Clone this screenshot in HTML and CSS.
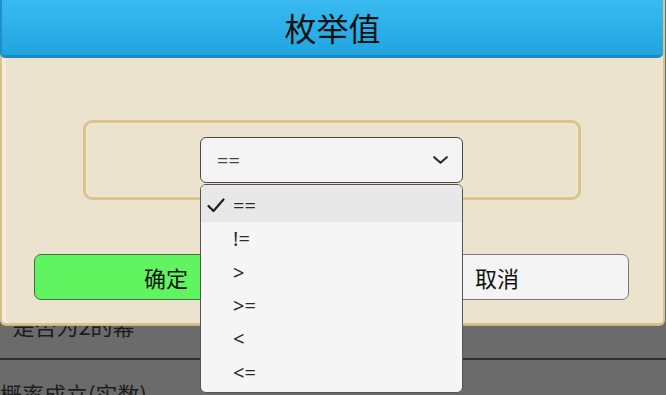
FILE: index.html
```html
<!DOCTYPE html>
<html lang="zh">
<head>
<meta charset="utf-8">
<title>枚举值</title>
<link rel="stylesheet" href="styles.css">
</head>
<body>
<div class="page">
  <div class="list">
    <div class="row"><div class="name">是否为2的幂</div></div>
    <div class="row"><div class="name">概率成立(实数)</div></div>
  </div>

  <div class="dialog">
    <div class="dialog-header">枚举值</div>
    <div class="dialog-body">
      <div class="panel">
        <div class="select">
          <span class="select-value">==</span>
          <svg class="chevron" width="15" height="8" viewBox="0 0 15 8"><path d="M1.2 1.2 L7.5 6.8 L13.8 1.2" fill="none" stroke="#2e2e2e" stroke-width="2.2" stroke-linecap="round" stroke-linejoin="round"/></svg>
          <ul class="options">
            <li class="option selected"><span class="check"><svg width="18" height="15" viewBox="0 0 18 15"><path d="M1.5 8 L6.5 13 L16.5 1.5" fill="none" stroke="#222" stroke-width="2.2" stroke-linecap="round" stroke-linejoin="round"/></svg></span><span>==</span></li>
            <li class="option"><span class="check"></span><span>!=</span></li>
            <li class="option"><span class="check"></span><span>&gt;</span></li>
            <li class="option"><span class="check"></span><span>&gt;=</span></li>
            <li class="option"><span class="check"></span><span>&lt;</span></li>
            <li class="option"><span class="check"></span><span>&lt;=</span></li>
          </ul>
        </div>
      </div>
      <div class="buttons">
        <button class="btn btn-ok">确定</button>
        <button class="btn btn-cancel">取消</button>
      </div>
    </div>
  </div>
</div>
</body>
</html>
```

FILE: styles.css
```css
html, body {
  margin: 0;
  padding: 0;
}

body {
  width: 666px;
  height: 395px;
  overflow: hidden;
  background: #6b6b6b;
  font-family: "Noto Sans", "Noto Sans CJK SC", sans-serif;
}

.page {
  position: relative;
  width: 666px;
  height: 395px;
}

/* background list */
.list {
  padding-top: 292px;
}

.row {
  height: 66px;
  border-bottom: 2px solid #2f2f2f;
  display: flex;
  align-items: center;
}

.name {
  width: 147px;
  text-align: center;
  font-family: "Noto Sans CJK SC", sans-serif;
  font-size: 22px;
  color: #1c1c1c;
}

/* dialog */
.dialog {
  position: absolute;
  top: 0;
  left: 0;
  width: 665px;
  box-sizing: border-box;
  background: #ece3ce;
  border: 2px solid #d8c38f;
  border-top: 0;
  border-radius: 0 0 6px 6px;
  box-shadow: inset 4px 0 0 #f5eddb, 0 1px 0 #c9b27a;
}

.dialog-header {
  height: 55px;
  margin: 0 0 0 -2px;
  border-bottom: 3px solid #1a8cc5;
  border-left: 2px solid #1f90c8;
  border-radius: 0 0 5px 5px;
  background: linear-gradient(#38baf1, #22a4df);
  text-align: center;
  font-family: "Noto Sans CJK SC", sans-serif;
  font-size: 32px;
  line-height: 55px;
  color: #111;
}

.dialog-body {
  padding: 62px 34px 23px 32px;
}

.panel {
  width: 498px;
  height: 80px;
  box-sizing: border-box;
  margin: 0 auto;
  border: 3px solid #dbc48e;
  border-radius: 9px;
  box-shadow: inset 0 0 0 1px #f3ead6;
  display: flex;
  align-items: center;
  justify-content: center;
}

.select {
  position: relative;
  width: 263px;
  height: 46px;
  box-sizing: border-box;
  border: 1px solid #4a4a4a;
  border-radius: 6px;
  background: #f4f4f4;
  display: flex;
  align-items: center;
  justify-content: space-between;
  padding: 0 14px 0 16px;
  font-size: 20px;
  color: #444;
}

.options {
  position: absolute;
  top: calc(100% + 2px);
  left: -1px;
  width: 263px;
  box-sizing: border-box;
  margin: 0;
  padding: 0 0 3px;
  list-style: none;
  border: 1px solid #555;
  border-radius: 6px;
  background: #f5f5f5;
  z-index: 10;
  font-size: 20px;
  color: #2a2a2a;
}

.option {
  height: 33.33px;
  box-sizing: border-box;
  display: flex;
  align-items: center;
  padding-left: 6px;
}

.option.selected {
  height: 37.33px;
  padding-top: 4px;
  background: #e8e8e8;
  border-radius: 5px 5px 0 0;
}

.check {
  width: 26px;
  display: flex;
  align-items: center;
}

.buttons {
  margin-top: 54px;
  display: flex;
  justify-content: space-between;
}

.btn {
  width: 264px;
  height: 46px;
  box-sizing: border-box;
  border-radius: 7px;
  font-family: "Noto Sans CJK SC", sans-serif;
  font-size: 22px;
  color: #111;
  padding: 0;
}

.btn-ok {
  background: #60f460;
  border: 1px solid #3f6f3f;
}

.btn-cancel {
  background: #f4f4f4;
  border: 1.5px solid #7a7a7a;
}
```
